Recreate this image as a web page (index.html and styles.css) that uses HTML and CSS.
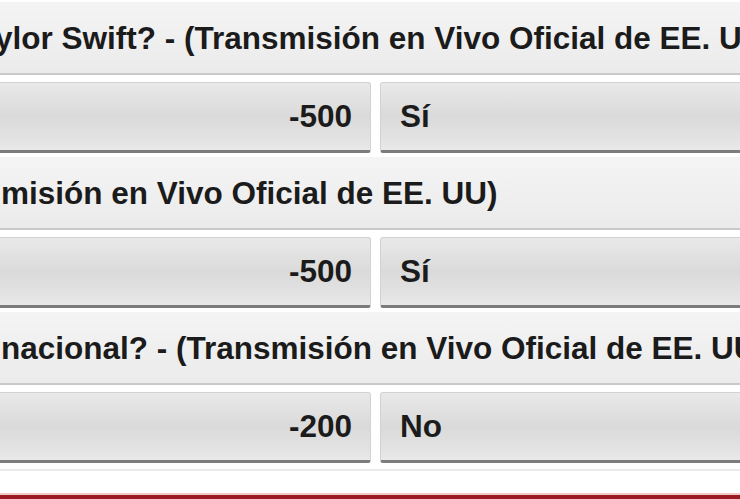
FILE: index.html
```html
<!DOCTYPE html>
<html lang="es">
<head>
<meta charset="utf-8">
<title>Mercados</title>
<link rel="stylesheet" href="styles.css">
</head>
<body>
<div class="board">
  <div class="market">
    <div class="question"><span class="q-text q-first">ylor Swift? - (Transmisión en Vivo Oficial de EE. UU)</span></div>
    <div class="odds">
      <div class="btn btn-price">-500</div>
      <div class="btn btn-choice">Sí</div>
    </div>
  </div>
  <div class="market">
    <div class="question"><span class="q-text">misión en Vivo Oficial de EE. UU)</span></div>
    <div class="odds">
      <div class="btn btn-price">-500</div>
      <div class="btn btn-choice">Sí</div>
    </div>
  </div>
  <div class="market">
    <div class="question"><span class="q-text">nacional? - (Transmisión en Vivo Oficial de EE. UU)</span></div>
    <div class="odds">
      <div class="btn btn-price">-200</div>
      <div class="btn btn-choice">No</div>
    </div>
  </div>
  <div class="separator"></div>
  <div class="footer-bar"></div>
</div>
</body>
</html>
```
FILE: styles.css
```css
html, body {
  margin: 0;
  padding: 0;
  background: #ffffff;
}
body {
  width: 740px;
  height: 499px;
  overflow: hidden;
  font-family: "Liberation Sans", Arial, sans-serif;
  font-weight: bold;
  color: #1b1b1b;
}
.board {
  display: flex;
  flex-direction: column;
  padding-top: 2px;
}
.market {
  display: flex;
  flex-direction: column;
  gap: 7px;
  padding-bottom: 4px;
}
.question {
  height: 71px;
  border-bottom: 2px solid #c9c9c9;
  background: linear-gradient(#f4f4f4, #ebebeb);
  display: flex;
  align-items: center;
  overflow: hidden;
  white-space: nowrap;
  font-size: 31.5px;
}
.q-text {
  padding-left: 1px;
  padding-top: 2px;
}
.q-first {
  margin-left: -6px;
}
.odds {
  display: grid;
  grid-template-columns: 391px 1fr;
  gap: 9px;
  margin-left: -20px;
  margin-right: -20px;
}
.btn {
  height: 67px;
  box-sizing: content-box;
  border: 1px solid #d2d2d2;
  border-bottom: 3px solid #7c7c7c;
  border-radius: 3px;
  background: linear-gradient(#e9e9e9 0%, #dadada 50%, #e3e3e3 85%, #e9e9e9 100%);
  display: flex;
  align-items: center;
  font-size: 31.5px;
  white-space: nowrap;
}
.btn-price {
  justify-content: flex-end;
  padding-right: 18px;
}
.btn-choice {
  padding-left: 19px;
}
.separator {
  height: 2px;
  margin-top: 2px;
  background: #ebebeb;
}
.footer-bar {
  margin-top: 22px;
  height: 6px;
  border-top: 2px solid #f2c9c9;
  background: #9b1b22;
}
```
